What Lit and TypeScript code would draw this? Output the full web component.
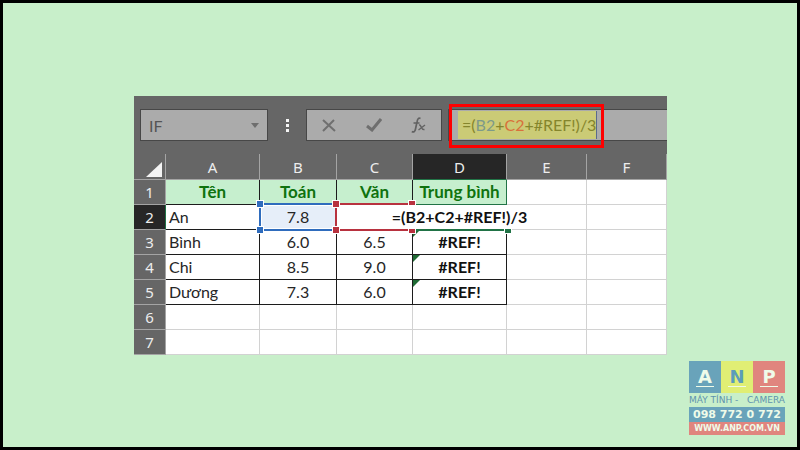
import { LitElement, html, css, nothing } from "lit";
import { customElement } from "lit/decorators.js";
import { classMap } from "lit/directives/class-map.js";

const COLUMNS = ["A", "B", "C", "D", "E", "F"];
const FORMULA = "=(B2+C2+#REF!)/3";
const ROWS: string[][] = [
  ["Tên", "Toán", "Văn", "Trung bình"],
  ["An", "7.8", "", FORMULA],
  ["Bình", "6.0", "6.5", "#REF!"],
  ["Chi", "8.5", "9.0", "#REF!"],
  ["Dương", "7.3", "6.0", "#REF!"],
  [],
  [],
];

@customElement("formula-bar")
export class FormulaBar extends LitElement {
  static styles = css`
    :host {
      display: flex;
      align-items: center;
      height: 58px;
      padding-left: 6px;
      background: #666;
      box-sizing: border-box;
      font-family: Lato, "Noto Sans", sans-serif;
      font-size: 16px;
    }
    .box {
      display: flex;
      align-items: center;
      box-sizing: border-box;
      height: 32px;
      border: 1px solid #474747;
      background: #ababab;
    }
    .name {
      width: 128px;
    }
    .name input {
      flex: 1;
      min-width: 0;
      padding: 0 0 0 8px;
      border: 0;
      background: none;
      color: #555;
      font: inherit;
    }
    button {
      display: grid;
      place-items: center;
      padding: 0;
      border: 0;
      background: none;
    }
    .drop {
      width: 24px;
      height: 30px;
    }
    .dots {
      width: 38px;
      flex: none;
      display: grid;
      place-items: center;
    }
    .actions {
      width: 136px;
      flex: none;
    }
    .actions button {
      flex: 1;
      height: 30px;
    }
    .entry {
      position: relative;
      flex: 1;
      margin-left: 6px;
      border-right: 0;
      padding-left: 9px;
    }
    .text {
      padding: 0 0 0 4px;
      line-height: 28px;
      background: #cbcb76;
      color: #85852c;
      border-right: 1px solid #5b6b8c;
      white-space: nowrap;
      outline: none;
    }
    .b {
      color: #7d9a8a;
    }
    .c {
      color: #d9713c;
    }
    .frame {
      position: absolute;
      inset: -6px auto -8px 0;
      width: 155px;
      box-sizing: border-box;
      border: 3px solid #fe0000;
      pointer-events: none;
    }
  `;

  render() {
    return html`
      <div class="box name">
        <input aria-label="Name box" .value=${"IF"} />
        <button class="drop" aria-label="Open name list">
          <svg width="8" height="5"><path d="M0 0h8L4 5z" fill="#6e6e6e" /></svg>
        </button>
      </div>
      <div class="dots">
        <svg width="3" height="13" fill="#f4f4f4">
          <path d="M0 0h3v3H0zM0 5h3v3H0zM0 10h3v3H0z" />
        </svg>
      </div>
      <div class="box actions">
        <button aria-label="Cancel">
          <svg width="14" height="13" fill="none" stroke="#6f6f6f" stroke-width="2">
            <path d="M1 1L13 12M12 1L1 12" />
          </svg>
        </button>
        <button aria-label="Enter">
          <svg width="16" height="14" fill="none" stroke="#6f6f6f" stroke-width="3">
            <path d="M1 8L6 12L15 1" />
          </svg>
        </button>
        <button aria-label="Insert function">
          <svg width="15" height="16" fill="none" stroke="#626262" stroke-width="1.7">
            <path d="M9.500 1.500C7.500 .5 6.500 2 6 5L4.500 12C4 15 2.500 15.500 .8 14.500M2.500 6H8.500" />
            <path d="M8 8C10.500 7 10 13.500 13.500 12.500M14 8L7.500 13" stroke-width="1.4" />
          </svg>
        </button>
      </div>
      <div class="box entry">
        <div class="text" role="textbox" aria-label="Formula" contenteditable="true" spellcheck="false"
          >=(<span class="b">B2</span>+<span class="c">C2</span>+#REF!)/3</div>
        <div class="frame"></div>
      </div>
    `;
  }
}

@customElement("sheet-grid")
export class SheetGrid extends LitElement {
  static styles = css`
    :host {
      display: block;
      font-family: Lato, "Noto Sans", sans-serif;
      font-size: 16px;
      color: #262626;
    }
    table {
      width: 100%;
      table-layout: fixed;
      border-collapse: separate;
      border-spacing: 0;
      background: #fff;
    }
    .w32 { width: 32px; }
    .w94 { width: 94px; }
    .w77 { width: 77px; }
    .w76 { width: 76px; }
    .w80 { width: 80px; }
    th,
    td {
      position: relative;
      box-sizing: border-box;
      height: 25px;
      padding: 0;
      line-height: 24px;
      border: 0 solid #d2d2d2;
      border-width: 0 1px 1px 0;
      text-align: center;
      white-space: nowrap;
    }
    th {
      background: #666;
      color: #ededed;
      border-color: #a4a4a4;
      font: 400 15px/24px "Noto Sans", sans-serif;
    }
    thead th {
      height: 26px;
    }
    tbody th.active {
      background: #262626;
      border-right-color: #217346;
    }
    thead th.active {
      background: #262626;
      border-bottom-color: #217346;
    }
    .all {
      display: block;
      margin: 5px 3px 0 auto;
    }
    .framed {
      border-color: #1c1c1c;
    }
    .left {
      text-align: left;
      padding-left: 3px;
    }
    .title {
      background: #c6efce;
      color: #0f730f;
      font-size: 17px;
      font-weight: 700;
    }
    .bold {
      font-weight: 700;
      color: #111;
    }
    .head {
      border-color: #217346;
    }
    .blue { background: #e6eef9; }
    .open { border-right-color: #fff; }
    .range {
      position: absolute;
      z-index: 1;
      border: 2px solid;
      pointer-events: none;
    }
    .range.first {
      inset: -2px -2px -2px -1px;
      color: #2f6cbd;
      box-shadow: inset 0 0 0 1px #fff;
    }
    .range.second {
      z-index: 2;
      inset: -2px -1px -2px -2px;
      color: #b8323f;
      box-shadow: inset 0 0 0 1px #fff;
    }
    .range.edit {
      inset: auto -1px -2px 0;
      border-width: 0 0 2px;
      color: #217346;
    }
    .range i {
      position: absolute;
      width: 6px;
      height: 6px;
      background: currentColor;
      box-shadow: 0 0 0 1px #fff;
    }
    .tl { left: -4px; top: -4px; }
    .tr { right: -4px; top: -4px; }
    .bl { left: -4px; bottom: -4px; }
    .br { right: -4px; bottom: -4px; }
    .editor {
      position: absolute;
      z-index: 3;
      inset: 0 -22px;
      display: flex;
      justify-content: center;
    }
    .editor span {
      background: #fff;
    }
    .error {
      position: absolute;
      left: 0;
      top: 0;
    }
  `;

  private cell(row: number, col: number) {
    const text = ROWS[row][col] ?? "";
    const framed = row < 5 && col < 4;
    const editing = row === 1 && col === 3;
    const classes = {
      framed,
      title: framed && row === 0,
      left: framed && row > 0 && col === 0,
      bold: framed && row > 0 && col === 3,
      head: row === 0 && col === 3,
      blue: row === 1 && col === 1,
      open: row === 1 && (col === 2 || col === 3),
    };
    return html`<td class=${classMap(classes)}>
      ${editing ? html`<div class="editor"><span>${text}</span></div>` : text}
      ${row === 1 && col === 1
        ? html`<div class="range first"><i class="tl"></i><i class="bl"></i></div>`
        : nothing}
      ${row === 1 && col === 2
        ? html`<div class="range second">
            <i class="tl"></i><i class="tr"></i><i class="bl"></i><i class="br"></i>
          </div>`
        : nothing}
      ${editing ? html`<div class="range edit"><i class="br"></i></div>` : nothing}
      ${framed && row > 1 && col === 3
        ? html`<svg class="error" width="7" height="7"><path d="M0 0H7L0 7Z" fill="#1f6b35" /></svg>`
        : nothing}
    </td>`;
  }

  render() {
    return html`
      <table aria-label="Worksheet">
        <colgroup>
          <col class="w32" /><col class="w94" /><col class="w77" /><col class="w76" />
          <col class="w94" /><col class="w80" /><col />
        </colgroup>
        <thead>
          <tr>
            <th aria-label="Select all">
              <svg class="all" width="16" height="15"><path d="M16 0V15H0Z" fill="#f4f4f4" /></svg>
            </th>
            ${COLUMNS.map((c) => html`<th scope="col" class=${classMap({ active: c === "D" })}>${c}</th>`)}
          </tr>
        </thead>
        <tbody>
          ${ROWS.map(
            (_, r) => html`<tr>
              <th scope="row" class=${classMap({ active: r === 1 })}>${r + 1}</th>
              ${COLUMNS.map((_c, c) => this.cell(r, c))}
            </tr>`
          )}
        </tbody>
      </table>
    `;
  }
}

@customElement("shop-badge")
export class ShopBadge extends LitElement {
  static styles = css`
    :host {
      display: block;
      width: 96px;
      font-family: "DejaVu Sans", sans-serif;
      font-weight: 700;
      color: #effbe9;
      text-align: center;
      white-space: nowrap;
    }
    .tiles {
      display: grid;
      grid-template-columns: repeat(3, 1fr);
      font-size: 18px;
      line-height: 19px;
    }
    .tile {
      height: 32px;
      padding: 6px 7px;
      box-sizing: border-box;
    }
    .tile span {
      display: block;
      border-bottom: 1px solid #effbe9;
    }
    .blue { background: #69a3ba; }
    .yellow { background: #e0ee74; color: #5b9cba; }
    .red { background: #e0857e; }
    .tag {
      display: flex;
      justify-content: space-between;
      font-size: 9px;
      line-height: 14px;
      font-weight: 400;
      color: #5f93ae;
    }
    a {
      display: block;
      color: inherit;
      text-decoration: none;
    }
    .phone { font-size: 11px; line-height: 15px; }
    .site { font-size: 8px; line-height: 13px; }
  `;

  render() {
    return html`
      <div class="tiles">
        <div class="tile blue"><span>A</span></div>
        <div class="tile yellow"><span>N</span></div>
        <div class="tile red"><span>P</span></div>
      </div>
      <div class="tag"><span>MÁY TÍNH -</span><span>CAMERA</span></div>
      <a class="phone blue" href="tel:0987720772">098 772 0 772</a>
      <a class="site red" href="#">WWW.ANP.COM.VN</a>
    `;
  }
}

@customElement("app-root")
export class AppRoot extends LitElement {
  static styles = css`
    :host {
      display: block;
      position: relative;
      box-sizing: border-box;
      min-height: 100vh;
      padding: 93px 130px 92px 131px;
      border: 3px solid #000;
      background: #c8efca;
    }
    .badge {
      position: absolute;
      right: 12px;
      bottom: 12px;
    }
  `;

  render() {
    return html`
      <main>
        <formula-bar></formula-bar>
        <sheet-grid></sheet-grid>
      </main>
      <shop-badge class="badge"></shop-badge>
    `;
  }
}
